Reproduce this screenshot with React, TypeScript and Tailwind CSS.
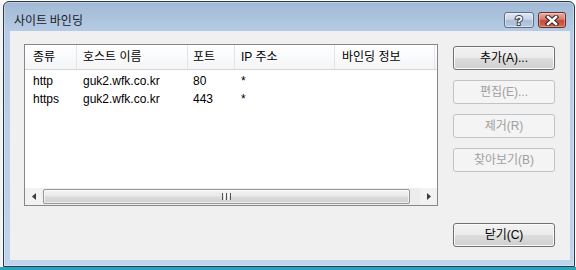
const cols = [
  { cls: 'w-[52px] pl-[8px]', label: '종류' },
  { cls: 'w-[111px] pl-[6px]', label: '호스트 이름' },
  { cls: 'w-[47px] pl-[5px]', label: '포트' },
  { cls: 'w-[100px] pl-[6px]', label: 'IP 주소' },
  { cls: 'w-[100px] pl-[7px]', label: '바인딩 정보' },
];

const rows = [
  ['http', 'guk2.wfk.co.kr', '80', '*', ''],
  ['https', 'guk2.wfk.co.kr', '443', '*', ''],
];

function Btn({ label, disabled }: { label: string; disabled?: boolean }) {
  return disabled ? (
    <div className="h-[24px] w-[102px] flex items-center justify-center rounded-[3px] border border-[#c1c4c7] bg-[#f4f4f4] text-[#a0a0a0] leading-[14px]">
      {label}
    </div>
  ) : (
    <div className="h-[24px] w-[102px] flex items-center justify-center rounded-[3px] border border-[#707070] bg-[linear-gradient(to_bottom,#f2f2f2_0%,#ebebeb_48%,#dddddd_52%,#cfcfcf_100%)] shadow-[inset_0_0_0_1px_#fbfbfb] text-black leading-[14px]">
      {label}
    </div>
  );
}

export default function App() {
  return (
    <div className="w-[576px] h-[270px] overflow-hidden flex flex-col bg-white font-['Liberation_Sans','Noto_Sans_CJK_KR',sans-serif] text-[12px] text-black">
      <div className="flex h-[267px] shrink-0 pt-[1px]">
        <div className="w-[3px] shrink-0 bg-[#f4f4f4]" />
        <div className="w-[572px] shrink-0 flex flex-col border border-[#2e3947] rounded-t-[6px] bg-[linear-gradient(to_bottom,#a1b9d5,#b6cce6_30px,#bed4ec)] shadow-[inset_0_0_0_1px_rgba(255,255,255,0.35)]">
          {/* title bar */}
          <div className="h-[29px] shrink-0 flex items-start">
            <div className="ml-[10px] mt-[10px] leading-[16px] font-['Noto_Sans_CJK_KR',sans-serif] text-[#1a1a1a]">
              사이트 바인딩
            </div>
            <div className="ml-auto mr-[8px] mt-[10px] flex gap-[4px]">
              <div className="w-[30px] h-[16px] rounded-[3px] border border-[#5d6e86] bg-[linear-gradient(to_bottom,#dfe8f3_0%,#c8d6e7_45%,#aabdd5_55%,#b9cbe0_100%)] shadow-[inset_0_0_0_1px_rgba(255,255,255,0.45)] flex items-center justify-center">
                <svg width="12" height="14" viewBox="0 0 12 14">
                  <text
                    x="6"
                    y="12"
                    textAnchor="middle"
                    fontSize="13"
                    fontWeight="bold"
                    fontFamily="Liberation Sans, sans-serif"
                    fill="#ffffff"
                    stroke="#3b4656"
                    strokeWidth="2"
                    paintOrder="stroke"
                  >
                    ?
                  </text>
                </svg>
              </div>
              <div className="w-[28px] h-[16px] rounded-[3px] border border-[#6b2e25] bg-[linear-gradient(to_bottom,#eab0a4_0%,#d9796a_45%,#c44a38_55%,#d26a55_100%)] shadow-[inset_0_0_0_1px_rgba(255,255,255,0.3)] flex items-center justify-center">
                <svg width="14" height="11" viewBox="0 0 14 11">
                  <path d="M3 2 L11 9 M11 2 L3 9" stroke="#3a2a28" strokeWidth="4.6" strokeLinecap="square" />
                  <path d="M3 2 L11 9 M11 2 L3 9" stroke="#ffffff" strokeWidth="2.4" strokeLinecap="square" />
                </svg>
              </div>
            </div>
          </div>

          {/* client area */}
          <div className="ml-[6px] mr-[4px] h-[229px] shrink-0 bg-[#f0f0f0] flex flex-col pl-[14px] pt-[13px]">
            <div className="flex">
              {/* list view */}
              <div className="w-[414px] h-[162px] border border-[#828790] bg-white flex flex-col">
                <div className="h-[25px] shrink-0 flex border-b border-[#d5d5d5] bg-[linear-gradient(to_bottom,#ffffff,#f4f5f7)]">
                  {cols.map((c, i) => (
                    <div key={i} className={`${c.cls} h-full flex items-center border-r border-[#e3e5e8] leading-[14px] pb-[1px]`}>
                      {c.label}
                    </div>
                  ))}
                </div>
                <div className="flex-1 pt-[2px] flex flex-col">
                  {rows.map((r, ri) => (
                    <div key={ri} className="h-[18px] flex items-center">
                      {r.map((v, ci) => (
                        <div key={ci} className={`${cols[ci].cls} leading-[14px] border-r border-transparent`}>
                          {v}
                        </div>
                      ))}
                    </div>
                  ))}
                </div>
                {/* horizontal scrollbar */}
                <div className="h-[17px] shrink-0 flex bg-[#ededed]">
                  <div className="w-[17px] flex items-center justify-center bg-[#f2f2f2]">
                    <svg width="4" height="7" viewBox="0 0 4 7">
                      <path d="M4 0 L0 3.5 L4 7 Z" fill="#3c3c3c" />
                    </svg>
                  </div>
                  <div className="ml-[1px] mt-[1px] w-[367px] h-[15px] rounded-[2px] border border-[#979797] bg-[linear-gradient(to_bottom,#f4f4f4_0%,#e9e9e9_45%,#dadada_55%,#d2d2d2_100%)] shadow-[inset_0_0_0_1px_rgba(255,255,255,0.6)] flex items-center justify-center">
                    <div className="flex gap-[1px]">
                      <div className="w-[1px] h-[7px] bg-[#555555]" />
                      <div className="w-[1px] h-[7px] bg-[#fafafa]" />
                      <div className="w-[1px] h-[7px] bg-[#555555]" />
                      <div className="w-[1px] h-[7px] bg-[#fafafa]" />
                      <div className="w-[1px] h-[7px] bg-[#555555]" />
                    </div>
                  </div>
                  <div className="flex-1" />
                  <div className="w-[17px] flex items-center justify-center bg-[#f2f2f2]">
                    <svg width="4" height="7" viewBox="0 0 4 7">
                      <path d="M0 0 L4 3.5 L0 7 Z" fill="#3c3c3c" />
                    </svg>
                  </div>
                </div>
              </div>

              {/* buttons */}
              <div className="ml-[15px] pt-[2px] flex flex-col gap-[10px]">
                <Btn label="추가(A)..." />
                <Btn label="편집(E)..." disabled />
                <Btn label="제거(R)" disabled />
                <Btn label="찾아보기(B)" disabled />
              </div>
            </div>

            <div className="mt-[17px] flex justify-end pr-[15px]">
              <Btn label="닫기(C)" />
            </div>
          </div>
        </div>
      </div>
      <div className="flex-1 bg-[#2aa3c0]" />
    </div>
  );
}
